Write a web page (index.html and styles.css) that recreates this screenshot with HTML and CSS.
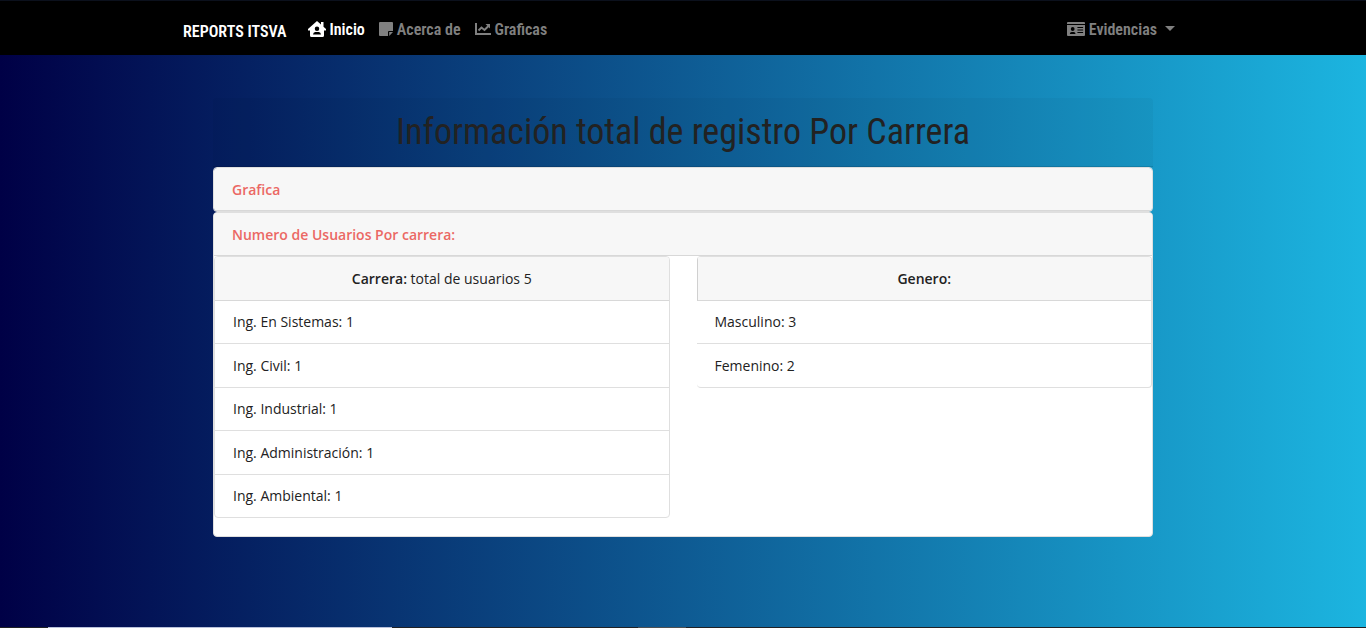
FILE: index.html
```html
<!DOCTYPE html>
<html lang="es">
<head>
  <meta charset="utf-8">
  <meta name="viewport" content="width=device-width, initial-scale=1">
  <title>Reports ITSVA</title>
  <link rel="stylesheet" href="styles.css">
</head>
<body>
  <header class="navbar">
    <nav class="navbar-inner">
      <a class="brand" href="#">REPORTS ITSVA</a>
      <a class="nav-link active" href="#"><svg class="icon" width="18" height="16" viewBox="0 0 18 16" aria-hidden="true"><path fill="currentColor" fill-rule="evenodd" d="M9 0 13 3.500V1h2.500V5.700L18 8v1.500h-2V14.500Q16 16 14.500 16H3.500Q2 16 2 14.500V9.500H0V8ZM9 5.500A2.200 2.200 0 1 0 9 10 2.200 2.200 0 0 0 9 5.500ZM5 13.500h8q-.3-2.500-2.200-2.500H7.200Q5.300 11 5 13.500Z"/></svg>Inicio</a>
      <a class="nav-link" href="#"><svg class="icon" width="14" height="14" viewBox="0 0 14 14" aria-hidden="true"><path fill="currentColor" d="M1 0h12q1 0 1 1v8H10q-1 0-1 1v4H1q-1 0-1-1V1Q0 0 1 0ZM10.200 10H14l-3.800 4Z"/></svg>Acerca de</a>
      <a class="nav-link" href="#"><svg class="icon" width="16" height="12" viewBox="0 0 16 12" aria-hidden="true"><path fill="none" stroke="currentColor" stroke-width="2" d="M1 0v11h15M3.500 7.500 6.500 4.500l3 2.500 4-4"/><path fill="currentColor" d="M10.500 1H15v4.500Z"/></svg>Graficas</a>
      <button class="nav-link menu" type="button" aria-haspopup="true"><svg class="icon" width="18" height="14" viewBox="0 0 19 14" preserveAspectRatio="none" aria-hidden="true"><path fill="currentColor" fill-rule="evenodd" d="M1 0h17q1 0 1 1v1H0V1Q0 0 1 0ZM0 3h19v10q0 1-1 1H1q-1 0-1-1ZM6 5a2 2 0 1 0 0 4 2 2 0 0 0 0-4ZM3 12h6q0-2-2-2H5q-2 0-2 2ZM11 5v1h6V5ZM11 7.500v1h6v-1ZM11 10v1h6v-1Z"/></svg>Evidencias<span class="caret"></span></button>
    </nav>
  </header>

  <main class="report">
    <h1 class="report-title">Información total de registro Por Carrera</h1>
    <section class="card">
      <h2 class="card-header"><a class="card-link" href="#">Grafica</a></h2>
    </section>
    <section class="card card-open">
      <h2 class="card-header"><a class="card-link" href="#">Numero de Usuarios Por carrera:</a></h2>
      <div class="columns">
        <div class="panel">
          <div class="panel-header"><strong class="label">Carrera:</strong> total de usuarios 5</div>
          <ul class="list">
            <li class="list-item">Ing. En Sistemas: 1</li>
            <li class="list-item">Ing. Civil: 1</li>
            <li class="list-item">Ing. Industrial: 1</li>
            <li class="list-item">Ing. Administración: 1</li>
            <li class="list-item">Ing. Ambiental: 1</li>
          </ul>
        </div>
        <div class="panel panel-open">
          <div class="panel-header"><strong class="label">Genero:</strong></div>
          <ul class="list">
            <li class="list-item">Masculino: 3</li>
            <li class="list-item">Femenino: 2</li>
          </ul>
        </div>
      </div>
    </section>
  </main>
  <footer class="edge"><span class="edge-light"></span><span class="edge-gray"></span></footer>
</body>
</html>
```
FILE: styles.css
```css
* {
  box-sizing: border-box;
}

body {
  display: flex;
  flex-direction: column;
  min-height: 100vh;
  margin: 0;
  background: linear-gradient(to right, #000046, #1cb5e0);
  color: #222;
  font: 14px/1.5 "Open Sans", "Noto Sans", sans-serif;
}

.navbar {
  background: #000;
  border-top: 1px solid #0b101c;
  padding: 0 16px;
}

.navbar-inner {
  display: flex;
  align-items: center;
  max-width: 1000px;
  min-height: 54px;
  margin: 0 auto;
  padding-top: 4px;
  font: 600 16px/24px "Roboto Condensed", "Liberation Sans Narrow", sans-serif;
}

.brand {
  margin-right: 14px;
  padding-top: 3px;
  color: #fff;
  text-decoration: none;
}

.nav-link {
  display: flex;
  align-items: center;
  gap: 4px;
  padding: 0 7px;
  border: 0;
  background: none;
  color: #808080;
  font: inherit;
  text-decoration: none;
}

.icon {
  margin-bottom: 2px;
}

.active {
  color: #fff;
}

.menu {
  margin-left: auto;
}

.caret {
  margin: 0 1px 3px 4px;
  border: 5px solid transparent;
  border-top-color: currentColor;
  border-bottom: 0;
}

.report {
  width: 100%;
  max-width: 972px;
  margin: 43px auto 0;
  padding: 0 16px;
}

.report-title {
  margin: 0;
  padding: 10px 16px;
  border-bottom: 1px solid rgba(0, 0, 0, 0.13);
  border-radius: 4px 4px 0 0;
  background: rgba(0, 0, 0, 0.03);
  font: 400 36px/48px "Roboto Condensed", "Liberation Sans Narrow", sans-serif;
  text-align: center;
}

.card {
  overflow: hidden;
  border: 1px solid #dfdfdf;
  border-radius: 4px;
  background: #fff;
}

.card-open {
  padding-bottom: 18px;
}

.card-header {
  margin: 0;
  padding: 11px 18px 10px;
  border-bottom: 1px solid #d8d8d8;
  background: #f7f7f7;
  font-size: 14px;
  font-weight: 600;
  line-height: 21px;
}

.card-link {
  color: #eb6864;
  text-decoration: none;
}

.columns {
  display: grid;
  grid-template-columns: 1fr 1fr;
  align-items: start;
  gap: 27px;
}

.panel {
  overflow: hidden;
  border: 1px solid #dfdfdf;
  border-radius: 4px;
}

.panel-open {
  border-left: 0;
}

.panel-header {
  padding: 11px 18px;
  border-bottom: 1px solid #d8d8d8;
  background: #f7f7f7;
  text-align: center;
}

.panel-open .panel-header {
  border-left: 1px solid #d0d0d0;
}

.label {
  font-weight: 600;
}

.list {
  margin: 0;
  padding: 0;
  list-style: none;
}

.list-item {
  padding: 10px 18px 11px;
  border-bottom: 1px solid #dfdfdf;
}

.list-item:nth-child(even) {
  padding-top: 11px;
}

.list-item:last-child {
  border-bottom: 0;
}

.edge {
  display: grid;
  grid-template-columns: 48px 344px 246px 48px;
  height: 1px;
  margin-top: auto;
  background: #202124;
}

.edge-light {
  grid-column: 2;
  background: #b9c1da;
}

.edge-gray {
  grid-column: 4;
  background: #4d5052;
}
```
